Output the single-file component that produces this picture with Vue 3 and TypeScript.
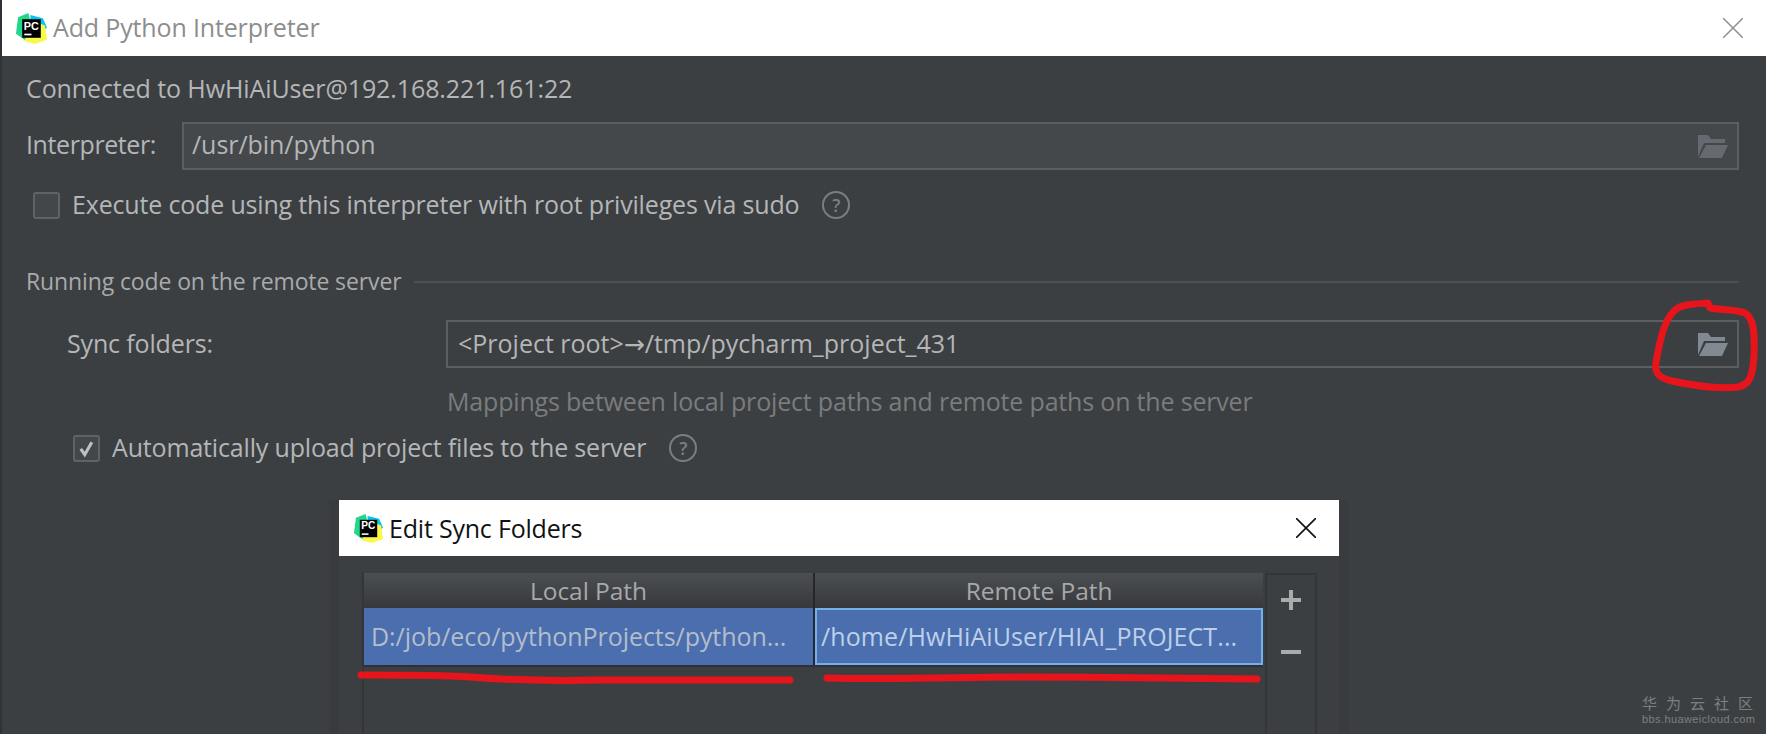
<script setup lang="ts">
const rows = [
  { local: 'D:/job/eco/pythonProjects/python...', remote: '/home/HwHiAiUser/HIAI_PROJECT...' },
]
</script>

<template>
  <div class="screen">
    <header class="titlebar">
      <svg class="logo" viewBox="0 0 30 30">
        <path d="M12 0 L2 4 L0 20 L10 27 L17 26 L14 8 Z" fill="#21d789" />
        <path d="M14 2 L26 5 L30 14 L24 20 L14 12 Z" fill="#07c3f2" />
        <path d="M18 8 L28 12 L30 26 L18 30 L8 27 L14 16 Z" fill="#fcf84a" />
        <rect x="6" y="6" width="18" height="18" fill="#000" />
        <rect x="8" y="20" width="7" height="1.6" fill="#fff" />
        <text x="7.6" y="16" class="logo-text">PC</text>
      </svg>
      <span class="title">Add Python Interpreter</span>
      <svg class="close" viewBox="0 0 20 20"><path d="M0 0 L20 20 M20 0 L0 20" stroke="#8f8f8f" stroke-width="1.5" fill="none" /></svg>
    </header>

    <main class="content">
      <div class="connected">Connected to HwHiAiUser@192.168.221.161:22</div>
      <div class="row-interp">
        <label>Interpreter:</label>
        <div class="field">
          <span class="value">/usr/bin/python</span>
          <svg class="folder dim" viewBox="0 0 31 23"><path d="M1 0 H11 L14 4 H28 V8 H7 L1 22 Z" fill="currentColor" /><path d="M9 10 H31 L25 23 H2 Z" fill="currentColor" /></svg>
        </div>
      </div>
      <div class="check-row first">
        <span class="box"></span>
        <span class="check-label">Execute code using this interpreter with root privileges via sudo</span>
        <span class="help">?</span>
      </div>

      <div class="section"><span>Running code on the remote server</span><i></i></div>

      <div class="row-sync">
        <label>Sync folders:</label>
        <div class="field">
          <span class="value">&lt;Project root&gt;<span class="arrow">→</span>/tmp/pycharm_project_431</span>
          <svg class="folder" viewBox="0 0 31 23"><path d="M1 0 H11 L14 4 H28 V8 H7 L1 22 Z" fill="currentColor" /><path d="M9 10 H31 L25 23 H2 Z" fill="currentColor" /></svg>
        </div>
      </div>
      <div class="hint">Mappings between local project paths and remote paths on the server</div>
      <div class="check-row second">
        <span class="box checked">
          <svg viewBox="0 0 26 26"><path d="M6.500 13.500 L11 20 L19 6" fill="none" stroke="#bfc1c3" stroke-width="3.500" /></svg>
        </span>
        <span class="check-label">Automatically upload project files to the server</span>
        <span class="help">?</span>
      </div>
    </main>

    <section class="dialog">
      <header class="dialog-title">
        <svg class="logo small" viewBox="0 0 30 30">
          <path d="M12 0 L2 4 L0 20 L10 27 L17 26 L14 8 Z" fill="#21d789" />
          <path d="M14 2 L26 5 L30 14 L24 20 L14 12 Z" fill="#07c3f2" />
          <path d="M18 8 L28 12 L30 26 L18 30 L8 27 L14 16 Z" fill="#fcf84a" />
          <rect x="6" y="6" width="18" height="18" fill="#000" />
          <rect x="8" y="20" width="7" height="1.6" fill="#fff" />
          <text x="7.6" y="16" class="logo-text">PC</text>
        </svg>
        <span>Edit Sync Folders</span>
        <svg class="close-small" viewBox="0 0 20 20"><path d="M0 0 L20 20 M20 0 L0 20" stroke="#111" stroke-width="1.6" fill="none" /></svg>
      </header>
      <div class="dialog-body">
        <div class="table">
          <div class="thead">
            <div class="th">Local Path</div>
            <div class="th">Remote Path</div>
          </div>
          <div v-for="r in rows" :key="r.local" class="tr">
            <div class="td">{{ r.local }}</div>
            <div class="td focus">{{ r.remote }}</div>
          </div>
        </div>
        <aside class="tools">
          <svg viewBox="0 0 20 20"><path d="M0 10 H20 M10 0 V20" stroke="#a9abad" stroke-width="4" /></svg>
          <svg viewBox="0 0 20 20"><path d="M0 10 H20" stroke="#a9abad" stroke-width="4" /></svg>
        </aside>
      </div>
    </section>

    <svg class="ink" viewBox="0 0 1766 734">
      <path d="M1708 303 C1695 304 1682 304 1675 310 C1664 320 1660 340 1656 362 C1654 374 1660 378 1672 381 C1695 386 1720 389 1738 387 C1750 385 1753 375 1754 355 C1755 335 1754 318 1745 313 C1735 309 1720 310 1710 308 L1708 303 Z" />
      <path d="M361 675 C385 675 440 675 470 677 C520 681 560 681 600 680 C680 680 740 680 790 680" />
      <path d="M827 678 C900 680 960 677 1030 677 C1110 677 1200 679 1257 679" />
    </svg>

    <div class="watermark">
      <div class="wm-cn">华为云社区</div>
      <div class="wm-en">bbs.huaweicloud.com</div>
    </div>
  </div>
</template>

<style scoped>
.screen {
  position: relative;
  width: 1766px;
  height: 734px;
  overflow: hidden;
  background: #3c3f41;
  font-family: "Open Sans", "Noto Sans", sans-serif;
  font-size: 25px;
  letter-spacing: -0.05px;
  color: #b4b6b8;
  box-sizing: border-box;
  border-left: 2px solid #2f3238;
}
.titlebar {
  height: 56px;
  box-sizing: border-box;
  background: #fff;
  display: flex;
  align-items: center;
  padding: 0 23px 0 14px;
}
.logo { width: 31px; height: 31px; flex: none; }
.logo.small { width: 29px; height: 29px; }
.logo-text { font: 700 10.500px "Liberation Sans", sans-serif; fill: #fff; letter-spacing: 0; }
.title {
  margin-left: 6px;
  padding-bottom: 2px;
  color: #8d8d8d;
  letter-spacing: -0.15px;
  white-space: nowrap;
}
.close { width: 20px; height: 20px; margin-left: auto; flex: none; }
.content { padding: 15px 27px 0 24px; }
.connected { height: 34px; line-height: 34px; white-space: nowrap; letter-spacing: -0.1px; }
.row-interp { display: flex; align-items: center; margin-top: 17px; }
.row-interp label { width: 156px; flex: none; padding-bottom: 4px; letter-spacing: -0.4px; }
.row-interp .field { background: #45484a; padding-left: 8px; }
.field {
  flex: 1;
  height: 48px;
  box-sizing: border-box;
  border: 2px solid #5c5f61;
  display: flex;
  align-items: center;
  justify-content: space-between;
  padding: 0 9px 0 10px;
}
.row-interp .value { padding-bottom: 4px; }
.row-sync .value { padding-bottom: 2px; letter-spacing: 0; }
.arrow { font-family: "DejaVu Sans", sans-serif; font-size: 25px; }
.folder { width: 31px; height: 23px; color: #818a92; flex: none; }
.folder.dim { color: #646a6f; }
.check-row { display: flex; align-items: center; white-space: nowrap; }
.check-label { padding-bottom: 2px; letter-spacing: -0.17px; }
.check-row.first { margin: 20px 0 0 7px; height: 30px; }
.check-row.first .box { margin-right: 12px; }
.check-row.first .help { margin-left: 23px; }
.box {
  width: 27px;
  height: 27px;
  flex: none;
  box-sizing: border-box;
  border: 2px solid #5f6365;
  border-radius: 3px;
  background: #43474a;
}
.box svg { display: block; width: 100%; height: 100%; }
.box.checked { margin-right: 12px; }
.help {
  width: 28px;
  height: 28px;
  flex: none;
  box-sizing: border-box;
  border: 2px solid #7b7e80;
  border-radius: 50%;
  color: #7b7e80;
  font-size: 18px;
  font-weight: 600;
  line-height: 24px;
  text-align: center;
  letter-spacing: 0;
}
.section {
  display: flex;
  align-items: center;
  margin-top: 45px;
  height: 34px;
  color: #a8aaac;
  font-size: 23px;
  letter-spacing: -0.12px;
  white-space: nowrap;
}
.section span { padding-bottom: 2px; }
.section i { flex: 1; height: 2px; background: #4d5052; margin-left: 13px; }
.row-sync { display: flex; align-items: center; margin-top: 21px; padding-left: 41px; }
.row-sync label { width: 379px; flex: none; padding-bottom: 2px; letter-spacing: -0.15px; }
.hint {
  margin: 16px 0 0 421px;
  height: 34px;
  line-height: 34px;
  color: #797c7e;
  letter-spacing: -0.18px;
  white-space: nowrap;
}
.check-row.second { margin: 15px 0 0 47px; height: 30px; }
.check-row.second .help { margin-left: 23px; }
.dialog {
  position: absolute;
  left: 337px;
  top: 500px;
  width: 1000px;
  height: 234px;
  background: #3c3f41;
  box-shadow: 10px 0 0 #393b3e, -10px 0 0 #393b3e;
}
.dialog-title {
  height: 56px;
  background: #fff;
  display: flex;
  align-items: center;
  padding: 0 23px 0 15px;
  color: #111;
  letter-spacing: -0.2px;
}
.dialog-title span { margin-left: 6px; padding-bottom: 1px; }
.close-small { width: 20px; height: 20px; margin-left: auto; }
.dialog-body { display: flex; margin: 17px 0 0 23px; height: 161px; }
.table { width: 901px; flex: none; border-left: 2px solid #333538; box-sizing: border-box; }
.thead {
  display: flex;
  height: 35px;
  background: linear-gradient(#4c4f52, #36383b);
}
.th {
  text-align: center;
  line-height: 35px;
  color: #a6a8aa;
  font-size: 24.500px;
}
.th:first-child { width: 451px; border-right: 2px solid #25272a; box-sizing: border-box; }
.th:last-child { flex: 1; }
.tr { display: flex; height: 59px; border-bottom: 2px solid #2e3033; box-sizing: border-box; }
.td {
  background: #4b6eaf;
  color: #b3bdcb;
  line-height: 57px;
  padding-left: 7px;
  white-space: nowrap;
  overflow: hidden;
  box-sizing: border-box;
}
.td:first-child { width: 451px; border-right: 2px solid #25272a; }
.td.focus { flex: 1; border: 2px solid #74b0ee; padding-left: 4px; line-height: 53px; color: #bcd0ea; letter-spacing: 0.1px; }
.tools {
  width: 52px;
  margin-left: 2px;
  display: flex;
  flex-direction: column;
  align-items: center;
  gap: 32px;
  padding-top: 15px;
  box-sizing: border-box;
  border-left: 2px solid #333538;
  border-right: 2px solid #333538;
  border-top: 2px solid #333538;
}
.tools svg { width: 20px; height: 20px; flex: none; }
.ink {
  position: absolute;
  left: -2px;
  top: 0;
  width: 1766px;
  height: 734px;
  pointer-events: none;
}
.ink path {
  fill: none;
  stroke: #e8141c;
  stroke-width: 7px;
  stroke-linecap: round;
  stroke-linejoin: round;
}
.watermark {
  position: absolute;
  right: 12px;
  bottom: 8px;
  width: 112px;
  color: #7c7f81;
}
.wm-cn {
  font-family: "Noto Sans CJK SC", sans-serif;
  font-size: 15px;
  letter-spacing: 9px;
  line-height: 18px;
  white-space: nowrap;
}
.wm-en {
  font-family: "Liberation Sans", sans-serif;
  font-size: 11px;
  line-height: 14px;
  letter-spacing: 0.4px;
  white-space: nowrap;
}
</style>
